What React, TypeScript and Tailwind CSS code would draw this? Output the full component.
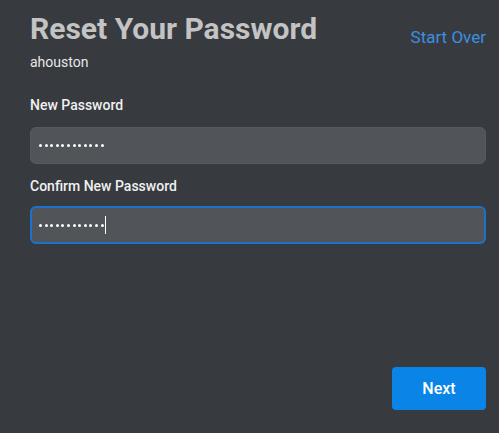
const Dots = () => (
  <span className="flex items-center gap-[2.6px]">
    {Array.from({ length: 12 }).map((_, i) => (
      <span key={i} className="h-[3px] w-[3px] rounded-full bg-white" />
    ))}
  </span>
);

export default function App() {
  return (
    <div className="flex h-[433px] w-[499px] flex-col bg-[#373a3f] pt-[11px] pr-[13px] pl-[30px] font-['Roboto',sans-serif]">
      <div className="flex items-start justify-between">
        <div className="flex flex-col">
          <h1 className="text-[30px] leading-[36px] font-bold text-[#c3c3c3]">Reset Your Password</h1>
          <p className="mt-[6px] text-[14px] leading-[18px] text-[#e8e8e8]">ahouston</p>
        </div>
        <button className="mt-[16px] text-[17px] leading-[20px] text-[#3d8fe0]">Start Over</button>
      </div>

      <label className="mt-[25px] text-[14px] leading-[18px] font-medium text-[#f0f0f0]">New Password</label>
      <div className="mt-[13px] flex h-[37px] items-center rounded-[6px] border border-[#56595e] bg-[#515459] px-[8px]">
        <Dots />
      </div>

      <label className="mt-[13px] text-[14px] leading-[18px] font-medium text-[#f0f0f0]">Confirm New Password</label>
      <div className="mt-[11px] flex h-[38px] items-center rounded-[6px] border-2 border-[#1a73c9] bg-[#515459] px-[7px]">
        <Dots />
        <span className="ml-[1px] h-[18px] w-[1px] bg-white" />
      </div>

      <div className="mt-auto mb-[23px] flex justify-end">
        <button className="h-[43px] w-[94px] rounded-[4px] bg-[#0a84e6] text-[16px] font-medium text-white">Next</button>
      </div>
    </div>
  );
}
